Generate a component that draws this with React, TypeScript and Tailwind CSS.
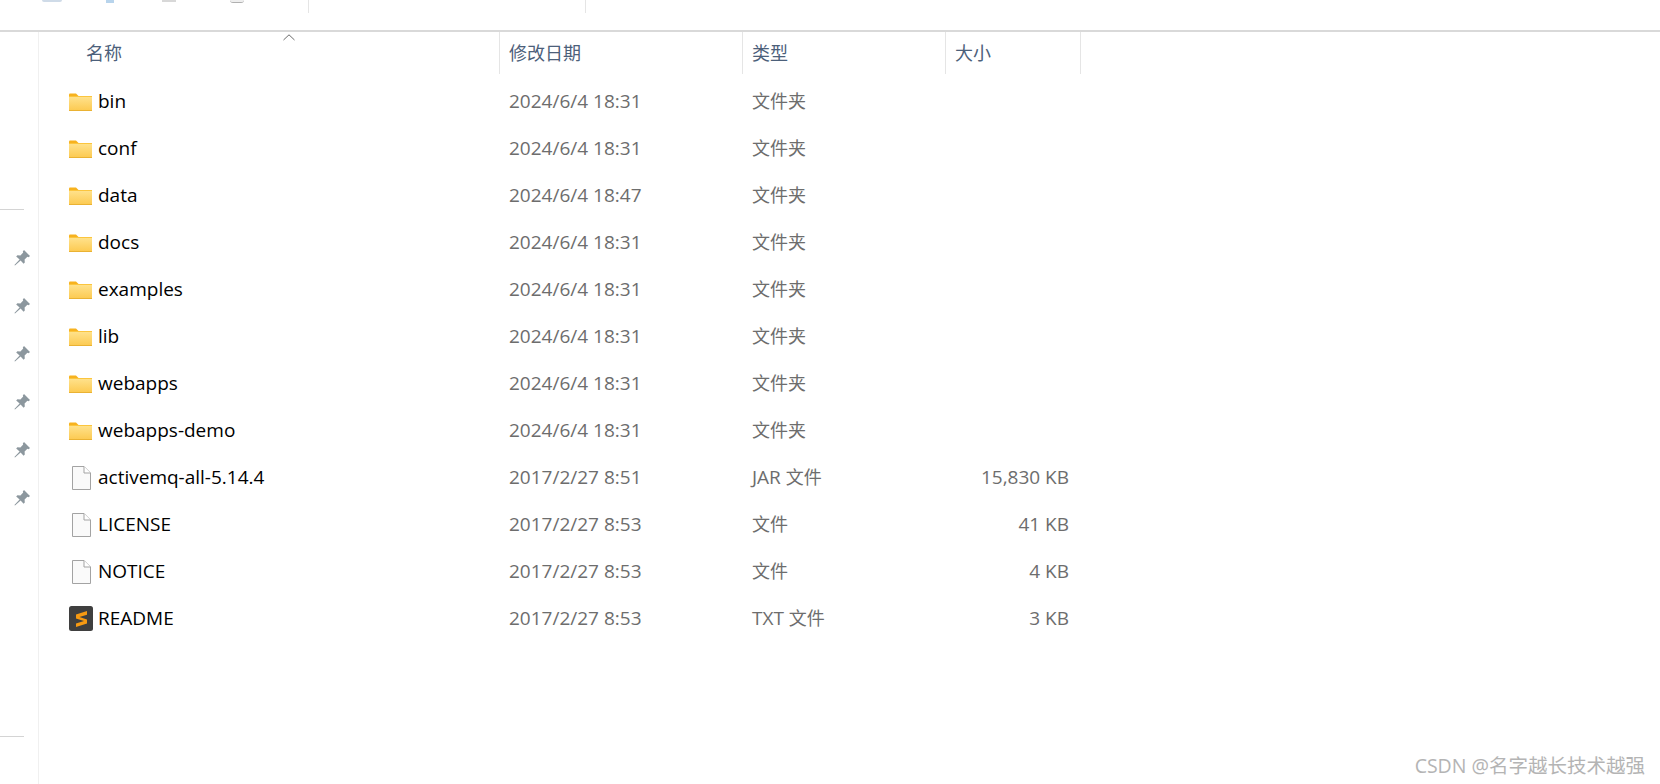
import React from "react";

const FONT = { fontFamily: '"Open Sans", "Noto Sans CJK SC", sans-serif' };

type Kind = "folder" | "file" | "sublime";

const rows: { name: string; date: string; ext?: string; type: string; size?: string; kind: Kind }[] = [
  { name: "bin", date: "2024/6/4 18:31", type: "文件夹", kind: "folder" },
  { name: "conf", date: "2024/6/4 18:31", type: "文件夹", kind: "folder" },
  { name: "data", date: "2024/6/4 18:47", type: "文件夹", kind: "folder" },
  { name: "docs", date: "2024/6/4 18:31", type: "文件夹", kind: "folder" },
  { name: "examples", date: "2024/6/4 18:31", type: "文件夹", kind: "folder" },
  { name: "lib", date: "2024/6/4 18:31", type: "文件夹", kind: "folder" },
  { name: "webapps", date: "2024/6/4 18:31", type: "文件夹", kind: "folder" },
  { name: "webapps-demo", date: "2024/6/4 18:31", type: "文件夹", kind: "folder" },
  { name: "activemq-all-5.14.4", date: "2017/2/27 8:51", ext: "JAR", type: "文件", size: "15,830 KB", kind: "file" },
  { name: "LICENSE", date: "2017/2/27 8:53", type: "文件", size: "41 KB", kind: "file" },
  { name: "NOTICE", date: "2017/2/27 8:53", type: "文件", size: "4 KB", kind: "file" },
  { name: "README", date: "2017/2/27 8:53", ext: "TXT", type: "文件", size: "3 KB", kind: "sublime" },
];

const FolderIcon = () => (
  <svg width="24" height="18" viewBox="0 0 24 18">
    <defs>
      <linearGradient id="folderFill" x1="0" y1="0" x2="0" y2="1">
        <stop offset="0" stopColor="#ffe38f" />
        <stop offset="1" stopColor="#fcc94f" />
      </linearGradient>
    </defs>
    <path d="M0 1.5 Q0 0.5 1 0.5 H7 L9.5 3 H0 Z" fill="#f7b21e" />
    <rect x="0" y="3" width="23" height="15" fill="url(#folderFill)" />
    <rect x="0" y="3" width="23" height="1" fill="#fbc53e" />
    <rect x="0" y="17" width="23" height="1" fill="#eab233" />
  </svg>
);

const FileIcon = () => (
  <svg width="24" height="26" viewBox="0 0 24 26">
    <path d="M3.5 1.5 H15 L21.5 8 V24.5 H3.5 Z" fill="#fafafa" stroke="#a3a3a3" />
    <path d="M15 1.5 V8 H21.5" fill="#fff" stroke="#a3a3a3" />
  </svg>
);

const SublimeIcon = () => (
  <svg width="24" height="25" viewBox="0 0 24 25">
    <rect width="24" height="25" rx="2.5" fill="#3f3f3f" />
    <path d="M18 5 L7 8.6 V12.4 L15 15 L7 17.4 V21 L18 17.4 V13.4 L10.5 11 L18 8.8 Z" fill="#f79a12" />
  </svg>
);

const PinIcon = () => (
  <svg width="18" height="18" viewBox="0 0 18 18">
    <path
      d="M11 1 L17 7 L15.6 8.2 L14.4 7.8 L11.6 10.6 L11.8 13.6 L10.6 14.8 L7.6 11.4 L2 16.6 L1.4 16 L6.6 10.4 L3.2 7.4 L4.4 6.2 L7.4 6.4 L10.2 3.6 L9.8 2.4 Z"
      fill="#8c979e"
    />
  </svg>
);

const HEADER_COLS = "grid grid-cols-[461px_243px_203px_135px_1fr]";

export default function App() {
  return (
    <div className="relative h-[784px] w-[1660px] overflow-hidden bg-white" style={FONT}>
      {/* bits of the ribbon cut off by the crop */}
      <div className="flex h-[30px] items-start">
        <div className="flex h-[13px] w-[309px] items-start border-r border-[#e5e5e5] pl-[42px]">
          <div className="h-[2px] w-[20px] rounded-b bg-[#cfdbe8]" />
          <div className="ml-[44px] h-[3px] w-[8px] bg-[#b8d4ec]" />
          <div className="ml-[48px] h-[2px] w-[14px] bg-[#d8d8d8]" />
          <div className="ml-[54px] h-[3px] w-[14px] rounded-b border-b border-[#b0b0b0] bg-[#eeeeee]" />
        </div>
        <div className="h-[13px] w-[277px] border-r border-[#e5e5e5]" />
      </div>
      <div className="h-[2px] bg-[#d9d9d9]" />

      <div className="flex h-[752px]">
        <aside className="flex w-[39px] shrink-0 flex-col border-r border-[#f0f0f0]">
          <div className="mt-[177px] h-px w-[24px] bg-[#d4d4d4]" />
          <div className="mt-[39px] flex flex-col items-center gap-[30px] pl-[5px]">
            {[0, 1, 2, 3, 4, 5].map((i) => (
              <PinIcon key={i} />
            ))}
          </div>
          <div className="mt-[229px] h-px w-[24px] bg-[#d4d4d4]" />
        </aside>

        <main className="flex-1">
          <div className={`${HEADER_COLS} relative h-[40px] text-[18px] text-[#4c607a]`}>
            <div className="border-r border-[#e5e5e5] pl-[47px] leading-[42px]">名称</div>
            <div className="border-r border-[#e5e5e5] pl-[9px] leading-[42px]">修改日期</div>
            <div className="border-r border-[#e5e5e5] pl-[9px] leading-[42px]">类型</div>
            <div className="border-r border-[#e5e5e5] pl-[9px] leading-[42px]">大小</div>
            <svg className="absolute left-[244px] top-[2px]" width="12" height="7" viewBox="0 0 12 7">
              <path d="M0.5 6 L6 0.8 L11.5 6" fill="none" stroke="#6b6b6b" />
            </svg>
          </div>

          <div className="pt-[6px]">
            {rows.map((r) => (
              <div key={r.name} className={`${HEADER_COLS} h-[47px] items-center text-[19px]`}>
                <div className="flex items-center pl-[30px] text-black">
                  <div className="flex w-[29px] items-center">
                    {r.kind === "folder" && <FolderIcon />}
                    {r.kind === "file" && <FileIcon />}
                    {r.kind === "sublime" && <SublimeIcon />}
                  </div>
                  <span>{r.name}</span>
                </div>
                <div className="pl-[9px] text-[#6d6d6d]">{r.date}</div>
                <div className="pl-[9px] text-[#6d6d6d]">
                  {r.ext && <span>{r.ext} </span>}
                  <span className="text-[18px]">{r.type}</span>
                </div>
                <div className="pr-[12px] text-right text-[#6d6d6d]">{r.size}</div>
              </div>
            ))}
          </div>
        </main>
      </div>

      <div className="absolute right-[15px] top-[753px] text-[19.5px] leading-[26px] text-[#b4b4b4]">
        CSDN @名字越长技术越强
      </div>
    </div>
  );
}
